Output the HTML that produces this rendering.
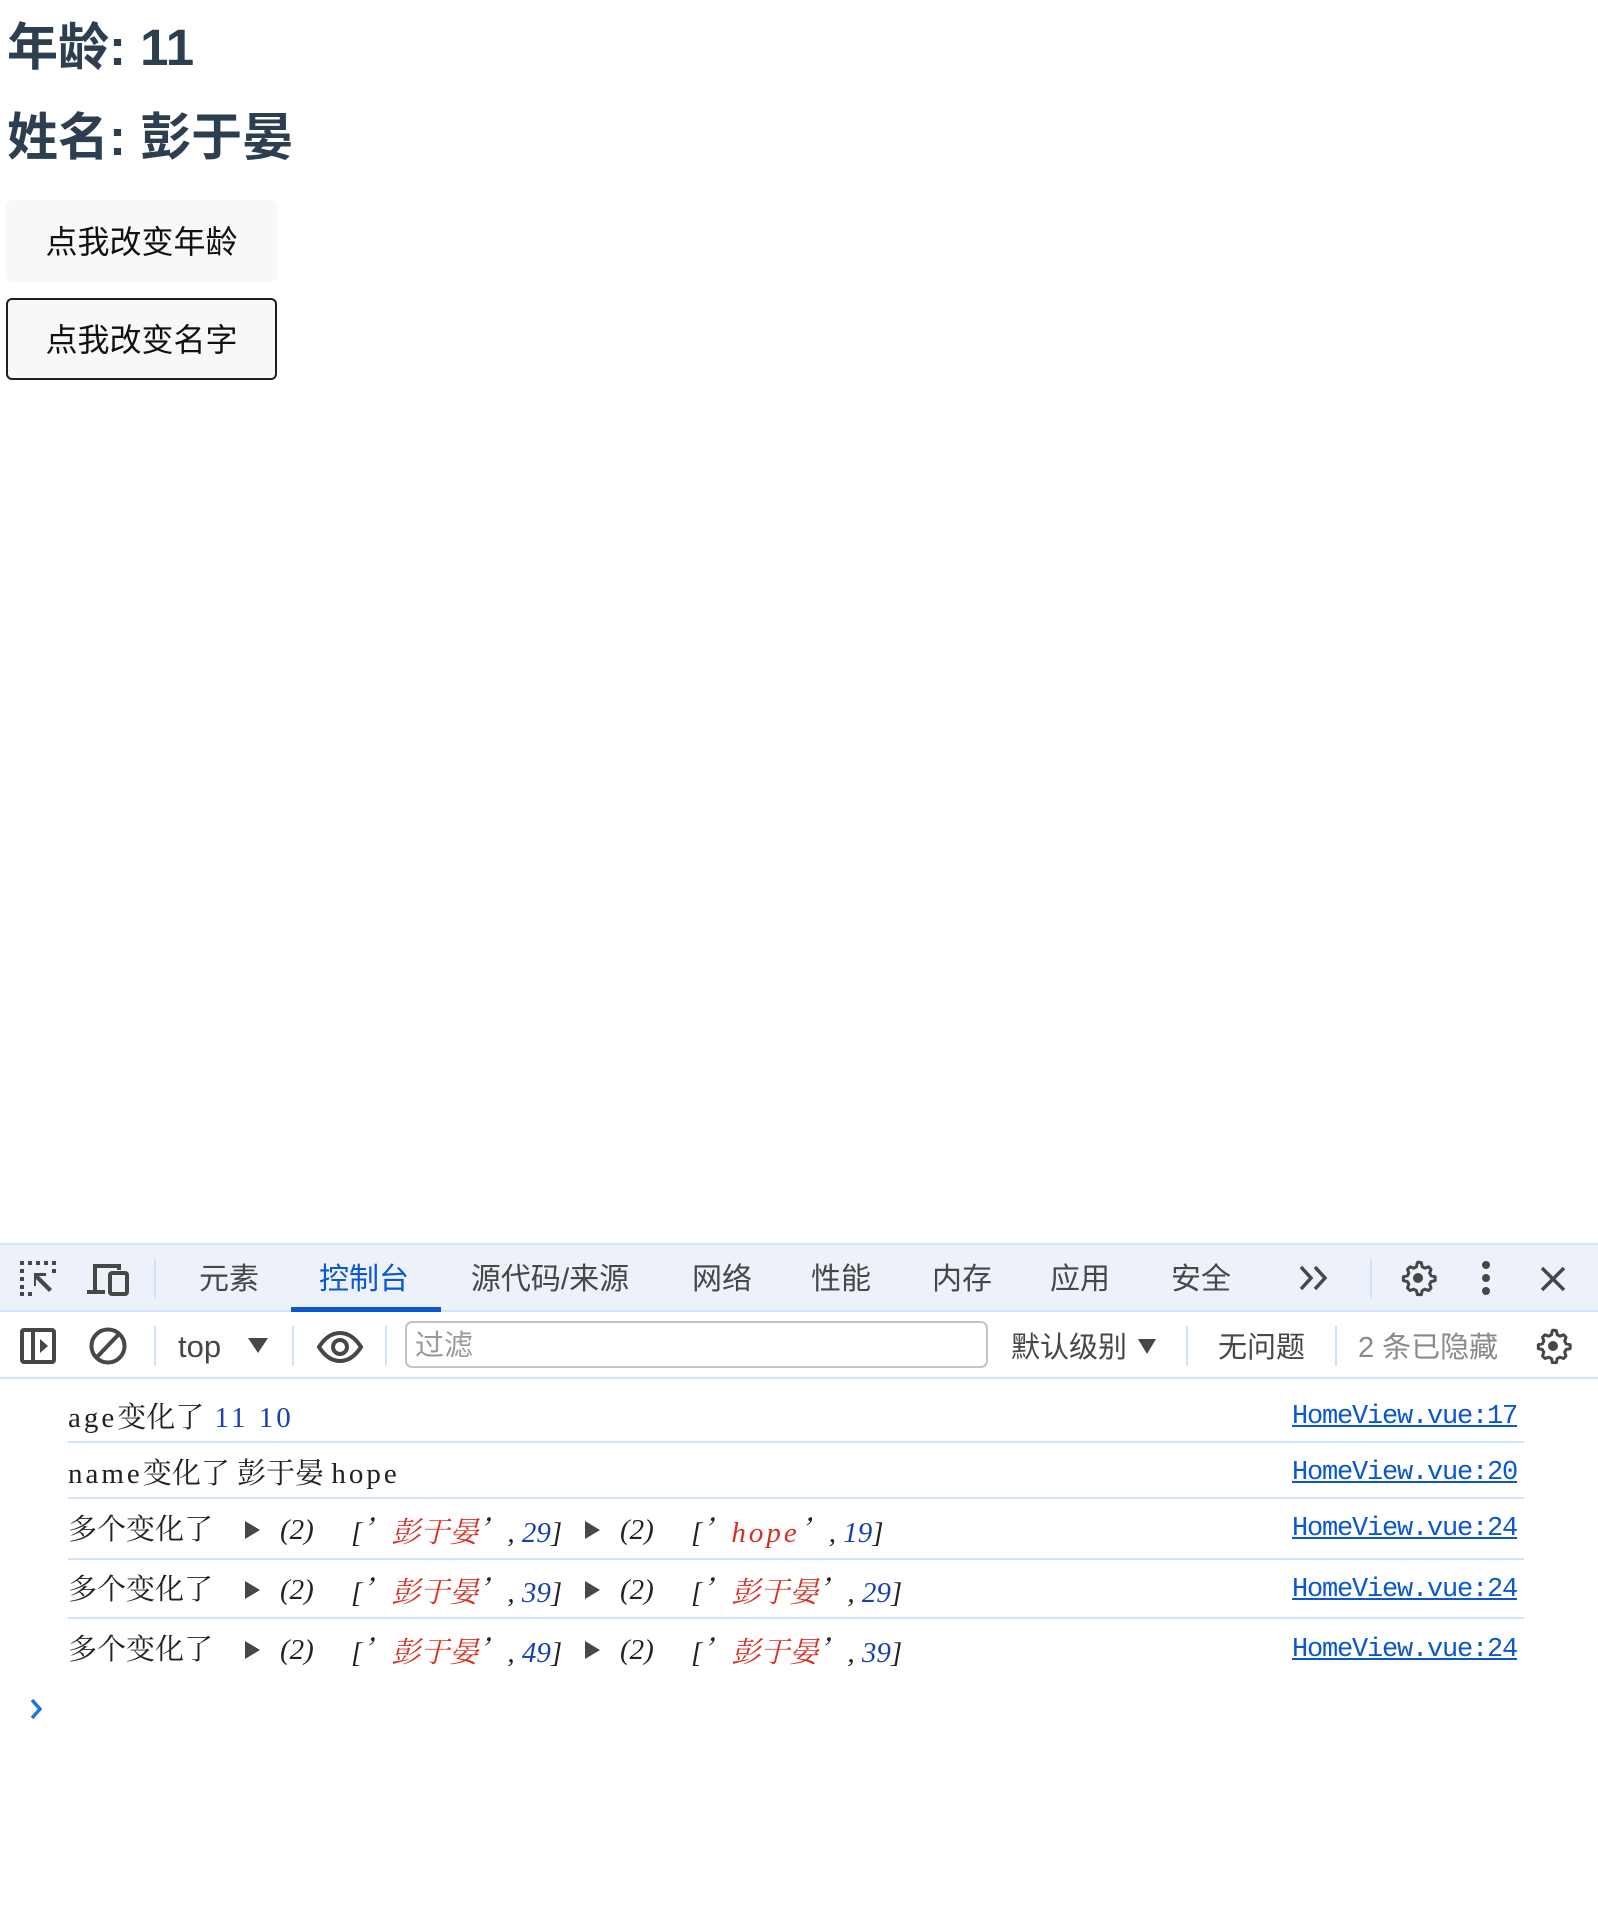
<!DOCTYPE html>
<html><head><meta charset="utf-8"><style>
*{margin:0;padding:0;box-sizing:border-box}
body{width:1598px;height:1913px;background:#fff;position:relative;overflow:hidden;font-family:"Liberation Sans","Noto Sans CJK SC",sans-serif}
.a{position:absolute;white-space:nowrap}
h1{position:absolute;left:7px;font-size:51px;font-weight:bold;color:#2c3e50;line-height:1;font-family:"Liberation Sans","Noto Sans CJK SC",sans-serif}
.btn{position:absolute;left:6px;width:271px;height:82px;background:#f8f8f8;border-radius:6px;font-size:32px;color:#111;text-align:center;line-height:84px}
.tab{position:absolute;top:1245px;height:67px;line-height:69px;font-size:30px;color:#474747;transform:translateX(-50%)}
.sep{position:absolute;width:2px;background:#d3e3fd}
.con{position:absolute;font-family:"Liberation Serif","Noto Serif CJK SC",serif;font-size:29px;color:#222;line-height:1;white-space:nowrap}
.l{letter-spacing:3px}
.cj{font-family:"Noto Serif CJK SC",serif}
.it{font-style:italic}
.r{color:#d93025}.b{color:#1a3fb0}
.tri{position:absolute;width:0;height:0;border-top:9px solid transparent;border-bottom:9px solid transparent;border-left:15px solid #474747}
.link{position:absolute;left:1292px;font-family:"Liberation Mono",monospace;font-size:27px;color:#0b57d0;text-decoration:underline;letter-spacing:-1.2px;line-height:1}
.hr{position:absolute;left:68px;width:1456px;height:2px;background:#d3e3fd}
</style></head><body>
<h1 style="top:22px">年龄: 11</h1>
<h1 style="top:112px">姓名: 彭于晏</h1>
<div class="btn" style="top:200px">点我改变年龄</div>
<div class="btn" style="top:298px;border:2px solid #1f1f1f;line-height:80px">点我改变名字</div>

<div class="a" style="left:0;top:1243px;width:1598px;height:69px;background:#edf2fa;border-top:2px solid #d3e3fd;border-bottom:2px solid #d3e3fd"></div>
<svg class="a" style="left:18px;top:1259px" width="40" height="38" viewBox="0 0 40 38"><g fill="#474747"><rect x="2" y="2" width="4" height="4"/><rect x="10" y="2" width="4" height="4"/><rect x="18" y="2" width="4" height="4"/><rect x="26" y="2" width="4" height="4"/><rect x="34" y="2" width="4" height="4"/><rect x="2" y="10" width="4" height="4"/><rect x="2" y="18" width="4" height="4"/><rect x="2" y="26" width="4" height="4"/><rect x="2" y="33" width="4" height="4"/><rect x="10" y="33" width="4" height="4"/><rect x="34" y="10" width="4" height="4"/></g><path d="M16 14h12v3h-7l13 13-3 3-13-13v7h-2z" fill="#474747"/></svg>
<svg class="a" style="left:86px;top:1262px" width="44" height="34" viewBox="0 0 44 34"><path d="M7 2h28v6h-4V6H11v22h8v4H1v-4h6z" fill="#474747"/><rect x="24" y="11" width="17" height="21" rx="2" fill="none" stroke="#474747" stroke-width="4"/></svg>
<div class="sep" style="left:154px;top:1258px;height:40px"></div>
<div class="tab" style="left:229px">元素</div>
<div class="tab" style="left:364px;color:#0b57d0">控制台</div>
<div class="a" style="left:291px;top:1307px;width:150px;height:5px;background:#0b57d0"></div>
<div class="tab" style="left:550px">源代码/来源</div>
<div class="tab" style="left:722px">网络</div>
<div class="tab" style="left:841px">性能</div>
<div class="tab" style="left:962px">内存</div>
<div class="tab" style="left:1080px">应用</div>
<div class="tab" style="left:1201px">安全</div>
<svg class="a" style="left:1298px;top:1264px" width="34" height="28" viewBox="0 0 34 28"><path d="M3 3l10 11-10 11M17 3l10 11-10 11" fill="none" stroke="#474747" stroke-width="3.5"/></svg>
<div class="sep" style="left:1370px;top:1258px;height:40px"></div>
<svg class="a" style="left:1398px;top:1258px" width="40" height="40" viewBox="0 0 24 24"><path d="M12 2.5l2 .3.5 2.4 1.6.9 2.3-.8 1.4 1.5-.8 2.3.9 1.6 2.4.5v2.4l-2.4.5-.9 1.6.8 2.3-1.4 1.5-2.3-.8-1.6.9-.5 2.4h-2.4l-.5-2.4-1.6-.9-2.3.8-1.5-1.5.8-2.3-.9-1.6-2.4-.5v-2.4l2.4-.5.9-1.6-.8-2.3 1.5-1.5 2.3.8 1.6-.9.5-2.4z" fill="none" stroke="#474747" stroke-width="1.8" stroke-linejoin="round"/><circle cx="12" cy="12" r="3" fill="#474747"/></svg>
<svg class="a" style="left:1478px;top:1259px" width="16" height="38" viewBox="0 0 16 38"><circle cx="8" cy="6" r="4" fill="#474747"/><circle cx="8" cy="19" r="4" fill="#474747"/><circle cx="8" cy="32" r="4" fill="#474747"/></svg>
<svg class="a" style="left:1539px;top:1265px" width="28" height="28" viewBox="0 0 28 28"><path d="M3 3l22 22M25 3L3 25" stroke="#474747" stroke-width="3.5"/></svg>

<div class="a" style="left:0;top:1377px;width:1598px;height:2px;background:#d3e3fd"></div>
<svg class="a" style="left:19px;top:1327px" width="38" height="38" viewBox="0 0 38 38"><rect x="3" y="3" width="32" height="32" rx="2" fill="none" stroke="#474747" stroke-width="4"/><rect x="12" y="3" width="4" height="32" fill="#474747"/><path d="M21 12l8 7-8 7z" fill="#474747"/></svg>
<svg class="a" style="left:88px;top:1326px" width="40" height="40" viewBox="0 0 40 40"><circle cx="20" cy="20" r="16.5" fill="none" stroke="#474747" stroke-width="4"/><path d="M30 9L9 31" stroke="#474747" stroke-width="4"/></svg>
<div class="sep" style="left:154px;top:1326px;height:40px"></div>
<div class="a" style="left:178px;top:1327px;font-size:31px;color:#474747;line-height:40px">top</div>
<div class="tri" style="left:248px;top:1338px;border:none;border-left:10px solid transparent;border-right:10px solid transparent;border-top:15px solid #474747"></div>
<div class="sep" style="left:292px;top:1326px;height:40px"></div>
<svg class="a" style="left:316px;top:1330px" width="48" height="34" viewBox="0 0 48 34"><path d="M3 17C10 6 17 3 24 3s14 3 21 14c-7 11-14 14-21 14S10 28 3 17z" fill="none" stroke="#474747" stroke-width="4"/><circle cx="24" cy="17" r="7" fill="none" stroke="#474747" stroke-width="4"/></svg>
<div class="sep" style="left:385px;top:1326px;height:40px"></div>
<div class="a" style="left:405px;top:1321px;width:583px;height:47px;border:2px solid #c4c4c4;border-radius:7px;font-size:29px;color:#9a9a9a;line-height:47px;padding-left:8px">过滤</div>
<div class="a" style="left:1011px;top:1328px;font-size:29px;color:#474747;line-height:40px">默认级别</div>
<div class="tri" style="left:1138px;top:1339px;border:none;border-left:9px solid transparent;border-right:9px solid transparent;border-top:15px solid #474747"></div>
<div class="sep" style="left:1186px;top:1326px;height:40px"></div>
<div class="a" style="left:1218px;top:1328px;font-size:29px;color:#474747;line-height:40px">无问题</div>
<div class="sep" style="left:1335px;top:1326px;height:40px"></div>
<div class="a" style="left:1358px;top:1328px;font-size:29px;color:#8a8a8a;line-height:40px">2 条已隐藏</div>
<svg class="a" style="left:1533px;top:1326px" width="40" height="40" viewBox="0 0 24 24"><path d="M12 2.5l2 .3.5 2.4 1.6.9 2.3-.8 1.4 1.5-.8 2.3.9 1.6 2.4.5v2.4l-2.4.5-.9 1.6.8 2.3-1.4 1.5-2.3-.8-1.6.9-.5 2.4h-2.4l-.5-2.4-1.6-.9-2.3.8-1.5-1.5.8-2.3-.9-1.6-2.4-.5v-2.4l2.4-.5.9-1.6-.8-2.3 1.5-1.5 2.3.8 1.6-.9.5-2.4z" fill="none" stroke="#474747" stroke-width="1.8" stroke-linejoin="round"/><circle cx="12" cy="12" r="3" fill="#474747"/></svg>

<div class="con" style="left:68px;top:1404px"><span class="l">age</span>变化了<span class="l"> <span class="b">11</span> <span class="b">10</span></span></div>
<div class="link" style="top:1404px">HomeView.vue:17</div>
<div class="hr" style="top:1441px"></div>
<div class="con" style="left:68px;top:1460px"><span class="l">name</span>变化了 彭于晏 <span class="l">hope</span></div>
<div class="link" style="top:1460px">HomeView.vue:20</div>
<div class="hr" style="top:1497px"></div>

<div class="con" style="left:68px;top:1516px">多个变化了</div>
<div class="tri" style="left:245px;top:1521px"></div>
<div class="con it" style="left:280px;top:1516px">(2)</div>
<div class="con it" style="left:351px;top:1516px">[<span class="cj">’</span><span class="r">彭于晏</span><span class="cj">’</span>, <span class="b">29</span>]</div>
<div class="tri" style="left:585px;top:1521px"></div>
<div class="con it" style="left:620px;top:1516px">(2)</div>
<div class="con it" style="left:691px;top:1516px">[<span class="cj">’</span><span class="r l">hope</span><span class="cj">’</span>, <span class="b">19</span>]</div>
<div class="link" style="top:1516px">HomeView.vue:24</div>
<div class="hr" style="top:1558px"></div>

<div class="con" style="left:68px;top:1576px">多个变化了</div>
<div class="tri" style="left:245px;top:1581px"></div>
<div class="con it" style="left:280px;top:1576px">(2)</div>
<div class="con it" style="left:351px;top:1576px">[<span class="cj">’</span><span class="r">彭于晏</span><span class="cj">’</span>, <span class="b">39</span>]</div>
<div class="tri" style="left:585px;top:1581px"></div>
<div class="con it" style="left:620px;top:1576px">(2)</div>
<div class="con it" style="left:691px;top:1576px">[<span class="cj">’</span><span class="r">彭于晏</span><span class="cj">’</span>, <span class="b">29</span>]</div>
<div class="link" style="top:1577px">HomeView.vue:24</div>
<div class="hr" style="top:1617px"></div>

<div class="con" style="left:68px;top:1636px">多个变化了</div>
<div class="tri" style="left:245px;top:1641px"></div>
<div class="con it" style="left:280px;top:1636px">(2)</div>
<div class="con it" style="left:351px;top:1636px">[<span class="cj">’</span><span class="r">彭于晏</span><span class="cj">’</span>, <span class="b">49</span>]</div>
<div class="tri" style="left:585px;top:1641px"></div>
<div class="con it" style="left:620px;top:1636px">(2)</div>
<div class="con it" style="left:691px;top:1636px">[<span class="cj">’</span><span class="r">彭于晏</span><span class="cj">’</span>, <span class="b">39</span>]</div>
<div class="link" style="top:1637px">HomeView.vue:24</div>

<svg class="a" style="left:28px;top:1697px" width="16" height="24" viewBox="0 0 16 24"><path d="M4 3l8 9-8 9" fill="none" stroke="#1a73e8" stroke-width="3.5"/></svg>
</body></html>
